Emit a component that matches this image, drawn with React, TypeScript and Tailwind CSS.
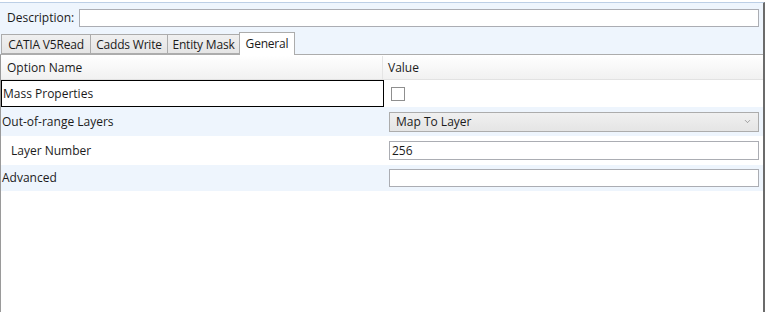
import { ChevronDown } from "lucide-react";

const tabs = [
  { label: "CATIA V5Read", w: "w-[89px]" },
  { label: "Cadds Write", w: "w-[77px]" },
  { label: "Entity Mask", w: "w-[72px]" },
];

const App = () => {
  return (
    <div className="w-[766px] h-[312px] bg-white text-[12px] text-[#1b1b1b] font-['Open_Sans',sans-serif] leading-none">
      <div className="h-[2px]" />
      <div className="w-[765px] h-[310px] border-t border-[#bccfe6] border-r-2 border-r-[#6b6b6b] flex flex-col">
        {/* top part */}
        <div className="bg-[#eef5fd]">
          <div className="flex items-center h-[29px] pl-[7px]">
            <span className="w-[72px]">Description:</span>
            <div className="w-[680px] h-[18px] bg-white border border-[#abadb3]" />
          </div>
          <div className="flex items-end h-[23px] pl-[1px] border-b border-[#acacac]">
            {tabs.map((t) => (
              <div
                key={t.label}
                className={`${t.w} h-[20px] pt-[1px] flex items-center justify-center bg-gradient-to-b from-[#f0f0f0] to-[#e5e5e5] border border-r-0 border-[#acacac] tracking-[-0.2px]`}
              >
                {t.label}
              </div>
            ))}
            <div className="w-[56px] h-[23px] -mb-px flex items-center justify-center bg-white border border-b-0 border-[#acacac] tracking-[-0.2px]">
              General
            </div>
          </div>
        </div>

        {/* grid */}
        <div className="flex-1 bg-white border-l border-[#9a9a9a]">
          <div className="flex h-[25px] pt-[1px] bg-gradient-to-b from-white to-[#f1f1f1] border-b border-[#e2e2e2]">
            <div className="w-[382px] pl-[6px] flex items-center border-r border-[#e5e5e5]">Option Name</div>
            <div className="pl-[5px] flex items-center">Value</div>
          </div>

          <div className="flex h-[27px]">
            <div className="w-[383px] flex items-center pl-[1px] border border-black">Mass Properties</div>
            <div className="flex items-center pl-[7px]">
              <div className="w-[14px] h-[14px] border border-[#8f8f8f] bg-white" />
            </div>
          </div>

          <div className="flex h-[29px] bg-[#eef5fd] items-center">
            <div className="w-[383px] pl-[1px]">Out-of-range Layers</div>
            <div className="ml-[5px] w-[370px] h-[20px] flex items-center justify-between px-[6px] border border-[#acacac] bg-gradient-to-b from-[#f0f0f0] to-[#e5e5e5]">
              <span>Map To Layer</span>
              <ChevronDown size={9} strokeWidth={1.5} className="text-[#6a6a6a]" />
            </div>
          </div>

          <div className="flex h-[29px] items-center">
            <div className="w-[383px] pl-[10px]">Layer Number</div>
            <div className="ml-[5px] w-[370px] h-[19px] flex items-center px-[2px] bg-white border border-[#abadb3]">256</div>
          </div>

          <div className="flex h-[26px] bg-[#eef5fd] items-center">
            <div className="w-[383px] pl-[1px]">Advanced</div>
            <div className="ml-[5px] w-[370px] h-[18px] bg-white border border-[#abadb3]" />
          </div>
        </div>
      </div>
    </div>
  );
};

export default App;
